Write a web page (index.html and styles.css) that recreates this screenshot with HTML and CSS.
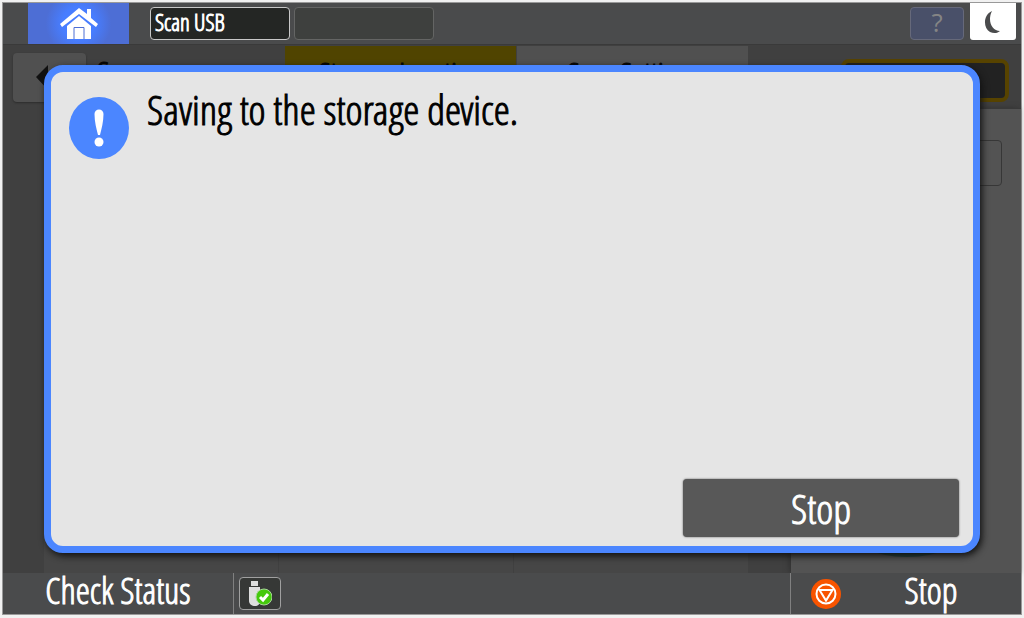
FILE: index.html
```html
<!DOCTYPE html>
<html lang="en">
<head>
<meta charset="utf-8">
<meta name="viewport" content="width=device-width, initial-scale=1">
<title>Scan USB</title>
<link rel="stylesheet" href="styles.css">
</head>
<body>
<div class="screen">
  <header class="topbar">
    <button class="home" type="button" aria-label="Home">
      <svg width="38" height="32" viewBox="0 0 38 32" aria-hidden="true">
        <path d="M0 16 19 0l8 6V1h4v9l7 6-2 3L19 6 2 19z" fill="#fff"/>
        <path d="M7 18 19 8l12 10v13H7z" fill="#fff"/>
        <path d="M14 31V19.500h10V31" fill="none" stroke="#4d6ed5"/>
      </svg>
    </button>
    <button class="app-tab app-tab-active" type="button">Scan USB</button>
    <button class="app-tab" type="button" aria-label="Empty slot"></button>
    <button class="help" type="button">?</button>
    <button class="sleep" type="button" aria-label="Sleep">
      <svg width="18" height="24" viewBox="0 0 18 24" aria-hidden="true">
        <path d="M8 1C-1 5-1 18 6 22c4 2 8 1 10-1C8 21 3 11 8 1z" fill="#4a4b4c"/>
      </svg>
    </button>
  </header>
  <main class="work">
    <div class="work-head">
      <button class="back" type="button" aria-label="Back">
        <svg width="24" height="28" viewBox="0 0 24 28" aria-hidden="true"><path d="M0 13 12 1v7h12v11H12v7z" fill="#111"/></svg>
      </button>
      <h1 class="title">Scan</h1>
      <button class="tab tab-active" type="button">Storage Location</button>
      <button class="tab" type="button">Scan Settings</button>
      <div class="counter-wrap"><div class="counter"></div></div>
    </div>
    <div class="work-body">
      <div class="columns"><div class="column"></div><div class="column"></div><div class="column"></div></div>
      <aside class="side"><button class="side-button" type="button" aria-label="Preview"></button><div class="start"></div></aside>
    </div>
  </main>
  <footer class="bottombar">
    <button class="status" type="button">Check Status</button>
    <div class="media">
      <button class="usb" type="button" aria-label="USB device ready">
        <svg width="24" height="26" viewBox="0 0 24 26" aria-hidden="true">
          <path d="M3 0h7v5H3zM1 6h11v14c0 3-2 5-5 5s-6-2-6-5z" fill="#dedede"/>
          <circle cx="16" cy="16" r="8" fill="#44c90b" stroke="#a9d79a"/>
          <path d="m12 16 3 3 5-6" fill="none" stroke="#fff" stroke-width="3"/>
        </svg>
      </button>
    </div>
    <button class="stop" type="button">
      <svg width="30" height="30" viewBox="0 0 30 30" aria-hidden="true">
        <circle cx="15" cy="15" r="15" fill="#f85400"/>
        <circle cx="15" cy="15" r="9.5" fill="none" stroke="#fff" stroke-width="2"/>
        <path d="M8.5 11h13L15 21.500z" fill="none" stroke="#fff" stroke-width="2"/>
      </svg>
      <span class="stop-label">Stop</span>
    </button>
  </footer>
  <section class="dialog" role="dialog" aria-labelledby="message">
    <div class="dialog-message">
      <svg class="notice" width="60" height="62" viewBox="0 0 60 62" aria-hidden="true">
        <ellipse cx="30" cy="31" rx="30" ry="31" fill="#4b86ff"/>
        <path d="M25.500 17a4.500 4.500 0 0 1 9 0c0 8-2 15-3.500 21h-2c-1.500-6-3.500-13-3.500-21z" fill="#fff"/>
        <circle cx="30" cy="45" r="4.500" fill="#fff"/>
      </svg>
      <p class="message" id="message">Saving to the storage device.</p>
    </div>
    <button class="dialog-stop" type="button">Stop</button>
  </section>
</div>
</body>
</html>
```
FILE: styles.css
```css
* { box-sizing: border-box; }
body {
  margin: 0;
  padding: 2px 2px 3px;
  min-height: 100vh;
  display: flex;
  background: #f1f1f1;
  font-family: "Open Sans Condensed Light", "Open Sans Condensed", "Liberation Sans Narrow", sans-serif;
  font-weight: 300;
  -webkit-text-stroke: 1px currentColor;
}
button {
  margin: 0;
  padding: 0;
  border: 0;
  background: none;
  color: #fff;
  font: inherit;
}
svg { display: block; flex: none; }
.screen {
  position: relative;
  flex: 1;
  display: flex;
  flex-direction: column;
  border: 1px solid #999;
  background: #404040;
}
.topbar {
  display: flex;
  align-items: flex-start;
  height: 41px;
  padding: 0 5px 0 25px;
  background: #4a4b4c;
}
.home {
  display: flex;
  justify-content: center;
  align-items: center;
  width: 101px;
  height: 41px;
  margin-right: 21px;
  background: radial-gradient(circle, #477dff 30%, #4d6ed5 60%);
}
.app-tab {
  width: 140px;
  height: 33px;
  margin: 4px 4px 0 0;
  padding: 0 0 4px 4px;
  border: 1px solid #646564;
  border-radius: 4px;
  background: #3e403e;
  font-size: 23px;
  line-height: 28px;
  text-align: left;
}
.app-tab-active {
  border-color: #c8c8c8;
  background: #242624;
}
.help {
  width: 54px;
  height: 33px;
  margin: 4px 6px 0 auto;
  padding-bottom: 4px;
  border: 1px solid #66697a;
  border-radius: 4px;
  background: #495069;
  color: #858585;
  font-family: "Open Sans", sans-serif;
  font-size: 26px;
  font-weight: 400;
  line-height: 28px;
  -webkit-text-stroke: 0;
}
.sleep {
  display: flex;
  justify-content: center;
  align-items: center;
  width: 46px;
  height: 37px;
  border-radius: 0 0 3px 3px;
  background: #fff;
}
.work {
  flex: 1;
  display: flex;
  flex-direction: column;
  border-top: 1px solid #3a3a3a;
}
.work-head {
  display: flex;
  height: 63px;
  padding: 1px 12px 0 10px;
}
.back {
  display: flex;
  align-items: center;
  width: 73px;
  height: 49px;
  margin: 7px 11px 0 0;
  padding-left: 23px;
  border-radius: 4px;
  background: #505050;
  box-shadow: 0 1px 2px #2c2c2c;
}
.title {
  width: 188px;
  margin: 10px 0 0;
  color: #050505;
  font-size: 31px;
  font-weight: 300;
  line-height: 32px;
}
.tab {
  width: 231px;
  margin-right: 1px;
  padding-bottom: 8px;
  background: #505050;
  color: #050505;
  font-size: 31px;
  line-height: 32px;
}
.tab-active { background: #504400; }
.counter-wrap {
  flex: 1;
  display: flex;
  justify-content: flex-end;
}
.counter {
  width: 168px;
  height: 43px;
  margin-top: 13px;
  border: 4px solid #574300;
  border-radius: 8px;
  background: #222;
}
.work-body { flex: 1; display: flex; }
.columns {
  flex: 1;
  display: flex;
  padding: 0 42px 0 41px;
}
.column {
  flex: 1;
  background: #464646;
  border-right: 1px solid #404040;
}
.side {
  display: flex;
  flex-direction: column;
  justify-content: space-between;
  align-items: flex-end;
  width: 230px;
  padding: 31px 19px 16px 0;
  border-top: 1px solid #393939;
  background: #535353;
  box-shadow: -2px 0 5px #333;
}
.side-button {
  width: 150px;
  height: 46px;
  border: 1px solid #373737;
  border-radius: 4px;
}
.start {
  width: 120px;
  height: 60px;
  margin-right: 35px;
  border-radius: 50%;
  background: #24433f;
}
.bottombar {
  display: flex;
  height: 41px;
  background: #4a4b4c;
}
.status {
  width: 230px;
  padding-bottom: 6px;
  font-size: 36px;
  line-height: 36px;
}
.media {
  flex: 1;
  padding: 4px 5px 0;
  border-left: 1px solid #808080;
}
.usb {
  display: flex;
  justify-content: center;
  align-items: center;
  width: 42px;
  height: 33px;
  border: 1px solid #a0a0a0;
  border-radius: 4px;
  background: #363836;
}
.stop {
  display: flex;
  align-items: center;
  width: 231px;
  padding-left: 20px;
  border-left: 1px solid #808080;
}
.stop-label {
  flex: 1;
  padding-bottom: 6px;
  font-size: 36px;
  line-height: 36px;
}
.dialog {
  position: absolute;
  inset: 62px 41px 61px;
  display: flex;
  flex-direction: column;
  justify-content: space-between;
  padding: 25px 14px 9px 18px;
  border: 7px solid #4b86ff;
  border-radius: 19px;
  background: #e5e5e5;
  box-shadow: 2px 3px 7px #111;
}
.dialog-message { display: flex; gap: 18px; }
.message {
  margin: 0;
  margin-top: -10px;
  color: #000;
  font-size: 41px;
  line-height: 44px;
}
.dialog-stop {
  align-self: flex-end;
  width: 276px;
  height: 58px;
  border-radius: 4px;
  background: #585858;
  box-shadow: 0 0 2px #555;
  font-size: 41px;
  line-height: 44px;
}
```
